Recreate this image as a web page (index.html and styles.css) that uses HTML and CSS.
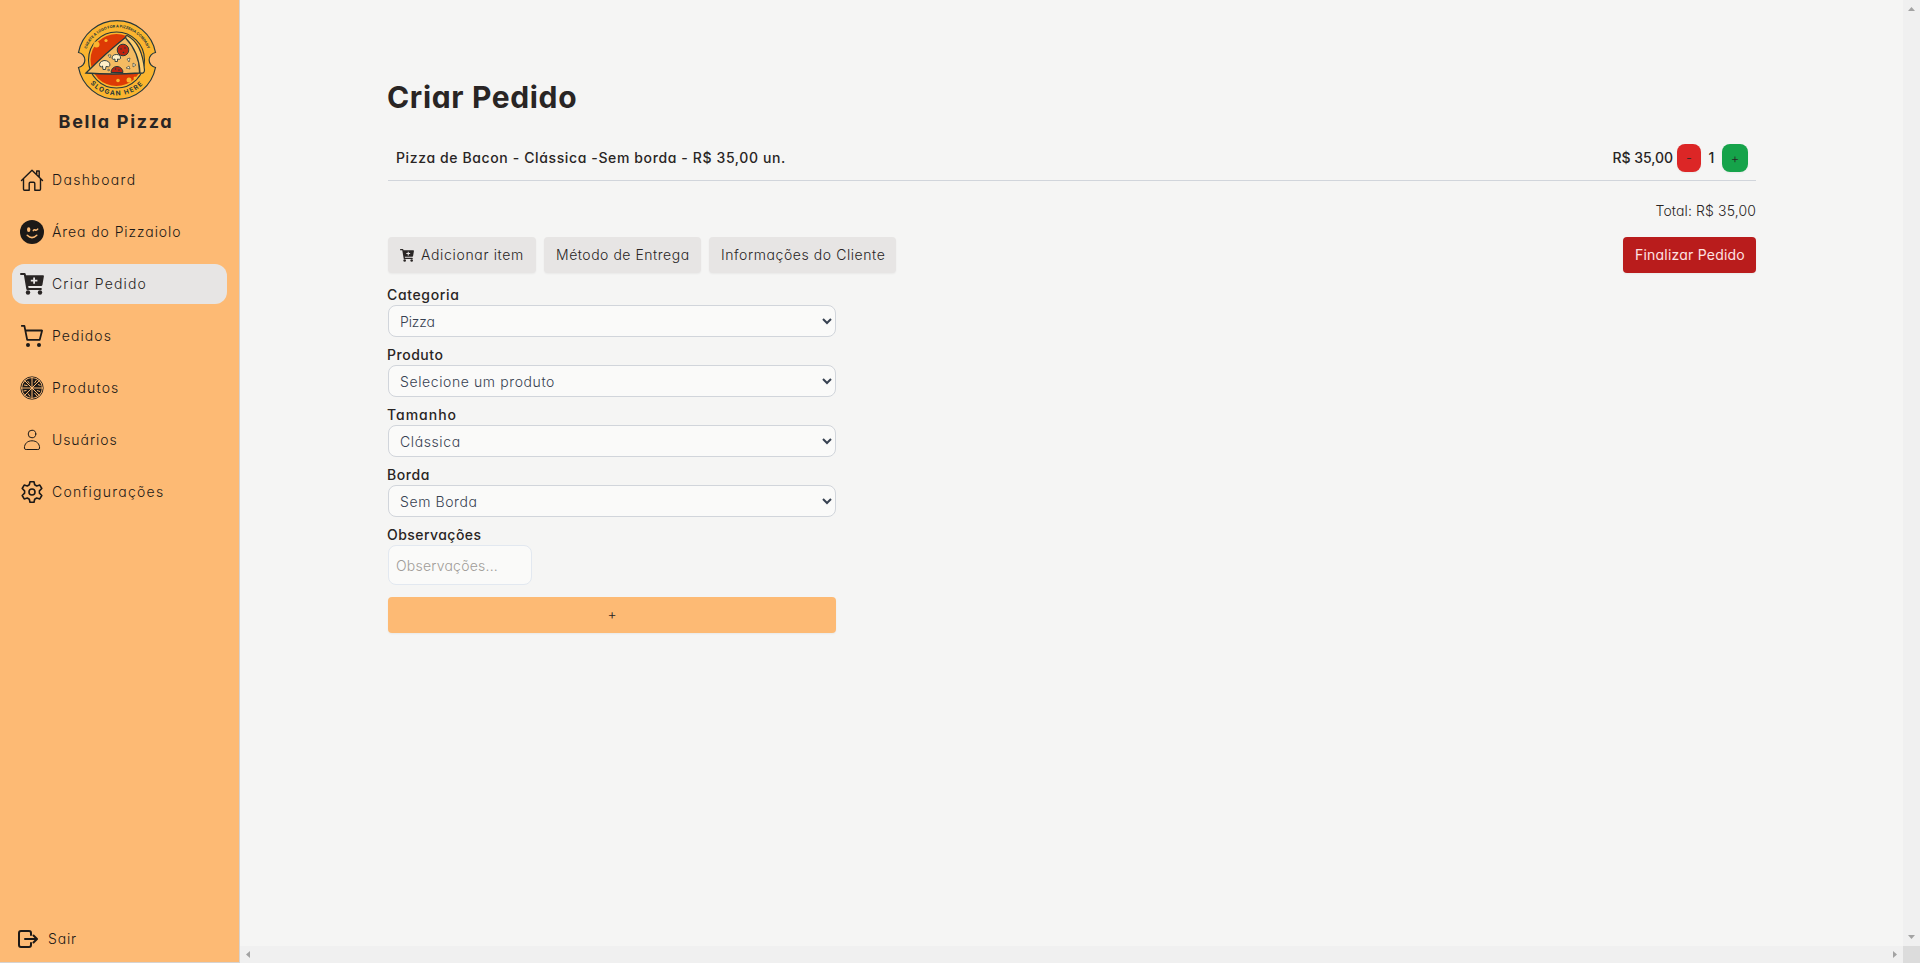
FILE: index.html
```html
<!DOCTYPE html>
<html lang="pt-BR">
<head>
<meta charset="utf-8">
<title>Bella Pizza</title>
<link rel="stylesheet" href="styles.css">
</head>
<body>
<svg width="0" height="0" class="defs">
  <symbol id="cart-plus" viewBox="0 0 24 22">
    <path fill="currentColor" fill-rule="evenodd" d="M1 0h3.6q.9 0 1.1.9L6 2.200h17q1.100 0 .9 1.100l-1.500 8.600q-.2 1.100-1.300 1.100H8.200l.4 2h12.300a1 1 0 0 1 0 2H7.300q-.9 0-1-.9L3.900 2H1a1 1 0 0 1 0-2zM13.200 4.500v2.200h-2.400v1.800h2.400v2.300h1.800v-2.300h2.400v-1.800H15V4.500z"/>
    <circle fill="currentColor" cx="8" cy="19.500" r="2.200"/><circle fill="currentColor" cx="20" cy="19.500" r="2.200"/>
  </symbol>
</svg>
<div class="app">
  <aside class="sidebar">
    <div class="brand">
      <svg class="logo" viewBox="0 0 80 80">
        <defs>
          <path id="arcTop" d="M7.500 40A32.500 32.500 0 0 1 72.500 40"/>
          <path id="arcBottom" d="M4.500 40A35.500 35.500 0 0 0 75.500 40"/>
        </defs>
        <path d="M1.500 32.500A39.200 39.200 0 0 1 78.500 32.500A7.600 7.600 0 0 0 78.500 47.500A39.200 39.200 0 0 1 1.500 47.500A7.600 7.600 0 0 0 1.500 32.500Z" fill="#fbb52f" stroke="#26383a" stroke-width="1.200"/>
        <circle cx="39.500" cy="40" r="28" fill="#fbb52f" stroke="#26383a" stroke-width="1.100"/>
        <circle cx="39.500" cy="40" r="26" fill="#dd3a05"/>
        <circle cx="19.500" cy="24.500" r="3" fill="#fbb52f"/><circle cx="29" cy="20.500" r="1.600" fill="#fbb52f"/>
        <circle cx="41" cy="60.500" r="1.800" fill="#fbb52f"/><circle cx="52" cy="60" r="2.500" fill="#fbb52f"/><circle cx="58" cy="58" r="1.500" fill="#fbb52f"/>
        <path d="M9 53Q30 32 49 17Q63 30 62.500 53Q36 55 9 53Z" fill="#f4bb62" stroke="#26383a" stroke-width="1.300"/>
        <path d="M50 15.500Q65 23 67.500 50Q67.500 54 63 53Q62 32 49 18.500Q48 15.500 50 15.500Z" fill="#ffcf70" stroke="#26383a" stroke-width="1.200"/>
        <g fill="#bd2410" stroke="#26383a"><circle cx="46" cy="30" r="5.800"/><path d="M34 52.500a6 6 0 1 1 12 0z"/></g>
        <g fill="#26383a"><circle cx="44" cy="29" r=".8"/><circle cx="48" cy="28" r=".8"/><circle cx="46.500" cy="32.500" r=".8"/><circle cx="38.500" cy="49" r=".8"/><circle cx="42" cy="50" r=".8"/></g>
        <g fill="#fff0c8" stroke="#26383a" stroke-width=".9"><path d="M23 46.500q-2-4.500 4-6 6 0 6 5-1 2-4 1l-.5 3h-2.500l-.5-3.500q-1 1.500-2.500.5z"/><path d="M35 38.500q0-4 4.500-4t4 4q-1 1.500-3 .5v2.500h-2.500V39q-2 1-3-.5z"/><path d="M31 35l3 0-1 3zM50 39l3-1-1 4zM56 43l3 2-3 2zM49 48l3-2 1 3zM31 49l2 1-2 1z" stroke-width=".6"/></g>
        <text class="logo-top"><textPath href="#arcTop" startOffset="50%">CREATE A LOGO FOR A PIZZERIA COMPANY</textPath></text>
        <text class="logo-bottom"><textPath href="#arcBottom" startOffset="50%">SLOGAN HERE</textPath></text>
      </svg>
      <div class="brand-name">Bella Pizza</div>
    </div>
    <nav class="menu">
      <a class="item"><svg viewBox="0 0 24 24" class="stroke thin"><path d="M1.500 12.500 12 2.200l10.500 10.300M3.500 10.800v10.400q0 1 1 1h4.700v-6.700q0-1.200 1.200-1.200h3.200q1.200 0 1.200 1.200v6.700h4.700q1 0 1-1V10.800M16.700 6.500V3h2.500v6"/></svg><span class="t-dash">Dashboard</span></a>
      <a class="item"><svg viewBox="0 0 24 24"><circle cx="12" cy="12" r="12" fill="currentColor"/><g class="face"><ellipse cx="8.700" cy="9.700" rx="1.700" ry="2.400"/><path d="M13.300 10.600q.8-1.200 2-.6t2.400-.9"/><path d="M7.200 15.300q4.800 4.600 9.600 0"/></g></svg><span class="t-area">Área do Pizzaiolo</span></a>
      <a class="item active"><svg viewBox="0 0 24 22" class="cart"><use href="#cart-plus"/></svg><span class="t-criar">Criar Pedido</span></a>
      <a class="item"><svg viewBox="0 0 24 24" class="stroke thick"><path d="M2 1.900h2.400l2.800 14h12.500L22.100 6.500H5.500"/><circle cx="8" cy="21" r="2" class="dot"/><circle cx="19" cy="21" r="2" class="dot"/></svg><span class="t-pedidos">Pedidos</span></a>
      <a class="item"><svg viewBox="0 0 24 24"><circle cx="12" cy="12" r="11.200" fill="none" stroke="currentColor" stroke-width=".9"/><circle cx="12" cy="12" r="9.900" fill="currentColor"/><g class="cuts"><path d="M12 1v22M1 12h22M4.300 4.300l15.400 15.400M19.700 4.300 4.300 19.700"/><path d="M7.500 5l2 2.500M14.500 7l2-3M18 8.500l2.500 1M17 14.500l3 1M14.500 17l2.500 3M8 17.500l2 3M3.500 15l3-.5M4 9l3.500.6"/></g></svg><span class="t-produtos">Produtos</span></a>
      <a class="item"><svg viewBox="0 0 24 24" class="stroke user"><circle cx="12" cy="6" r="3.800"/><path d="M5.800 21.500q-1.400 0-1.400-1.400c0-4.500 3-7.300 7.600-7.300s7.600 2.800 7.600 7.300q0 1.400-1.400 1.400z"/></svg><span class="t-usuarios">Usuários</span></a>
      <a class="item"><svg viewBox="0 0 24 24" class="stroke gear"><circle cx="12" cy="12" r="3"/><path d="M10 1.700h4l.7 3.100 2 1.200 3.100-.9 2 3.400-2.400 2.300v2.400l2.400 2.300-2 3.400-3.100-.9-2 1.200-.7 3.100h-4l-.7-3.100-2-1.200-3.100.9-2-3.400 2.400-2.300v-2.400L2.200 8.500l2-3.400 3.100.9 2-1.200z"/></svg><span class="t-config">Configurações</span></a>
    </nav>
    <a class="logout"><svg viewBox="0 0 20 18" class="stroke exit"><path d="M13 5V3q0-2-2-2H3Q1 1 1 3v12q0 2 2 2h8q2 0 2-2v-2M7 9h11.500M15.500 5.500 19 9l-3.500 3.500"/></svg><span class="t-sair">Sair</span></a>
  </aside>

  <div class="viewport">
    <main class="content">
      <h1>Criar Pedido</h1>
      <div class="order">
        <span class="t-line">Pizza de Bacon - Clássica -Sem borda - R$ 35,00 un.</span>
        <div class="qty">
          <span class="t-price">R$ 35,00</span>
          <button class="step minus">-</button>
          <span class="count">1</span>
          <button class="step plus">+</button>
        </div>
      </div>
      <div class="total"><span class="t-total">Total: R$ 35,00</span></div>
      <div class="tabs">
        <button class="tab tab-add"><svg viewBox="0 0 24 22"><use href="#cart-plus"/></svg><span class="t-add">Adicionar item</span></button>
        <button class="tab tab-delivery"><span class="t-delivery">Método de Entrega</span></button>
        <button class="tab tab-client"><span class="t-client">Informações do Cliente</span></button>
        <button class="finish"><span class="t-finish">Finalizar Pedido</span></button>
      </div>
      <form class="form">
        <div class="field"><label class="t-categoria">Categoria</label><select class="s-pizza"><option>Pizza</option></select></div>
        <div class="field"><label class="t-produto">Produto</label><select><option>Selecione um produto</option></select></div>
        <div class="field"><label class="t-tamanho">Tamanho</label><select><option>Clássica</option></select></div>
        <div class="field"><label class="t-borda">Borda</label><select><option>Sem Borda</option></select></div>
        <div class="field note"><label class="t-obs">Observações</label><input placeholder="Observações..."></div>
        <button type="button" class="add">+</button>
      </form>
    </main>
    <div class="vbar"><svg viewBox="0 0 7 4"><path d="M0 4 3.500 0 7 4z"/></svg><svg viewBox="0 0 7 4"><path d="M0 0h7L3.500 4z"/></svg></div>
    <div class="hbar"><svg viewBox="0 0 4 7"><path d="M4 0v7L0 3.500z"/></svg><svg viewBox="0 0 4 7"><path d="M0 0v7l4-3.500z"/></svg></div>
    <div class="corner"></div>
  </div>
</div>
</body>
</html>
```
FILE: styles.css
```css
* { box-sizing: border-box; }
body { margin: 0; overflow: hidden; background: #f5f5f4; color: #292524; }
body, button, select, input {
  font-family: Inter, "Open Sans", sans-serif;
  font-feature-settings: "cv11";
  font-size: 14px;
  font-weight: 300;
  line-height: 20px;
}
button { border: 0; padding: 0; color: inherit; }
span, label { white-space: nowrap; }
.defs { display: block; }
.app { display: flex; height: 963px; }

.sidebar {
  width: 240px; flex: none; display: flex; flex-direction: column;
  background: #fdba74; border-right: 1px solid #d6d3d1; border-bottom: 1px solid #d6d3d1;
  padding: 20px 12px 12px; color: #1c1917;
}
.brand { display: flex; flex-direction: column; align-items: center; height: 140px; }
.logo { width: 80px; height: 80px; margin-left: -6px; }
.logo-top, .logo-bottom { text-anchor: middle; fill: #26383a; font-weight: 700; }
.logo-top { font-size: 3.700px; }
.logo-bottom { font-size: 6.500px; letter-spacing: 1.300px; }
.brand-name { font-size: 18px; font-weight: 700; letter-spacing: 1.700px; line-height: 24px; margin: 10px 0 0 -7px; color: #292524; }
.menu { display: flex; flex-direction: column; gap: 12px; }
.item { display: flex; align-items: center; height: 40px; padding-left: 8px; gap: 8px; border-radius: 12px; width: 215px; }
.item svg { width: 24px; height: 24px; flex: none; }
.item svg.cart { height: 22px; }
.active { background: #e7e5e4; color: #292524; }
.logout { display: flex; align-items: center; gap: 10px; margin-top: auto; height: 22px; padding-left: 6px; }
.logout svg { width: 20px; height: 18px; }
.stroke { fill: none; stroke: currentColor; stroke-linejoin: round; stroke-linecap: round; }
.thin { stroke-width: 1.400; }
.user { stroke-width: 1; }
.thick { stroke-width: 1.800; stroke-linecap: square; }
.gear { stroke-width: 1.600; }
.exit { stroke-width: 2; }
.dot { fill: currentColor; stroke: none; }
.face { fill: none; stroke: #fdba74; stroke-width: 1.500; stroke-linecap: round; }
.face ellipse { fill: #fdba74; stroke: none; }
.cuts { stroke: #fdba74; stroke-width: 1; fill: none; }

.viewport { flex: 1; display: grid; grid-template: 946px 17px / 1fr 17px; }
.content { padding: 76px 147px 0 148px; min-width: 0; }
h1 { margin: 0 0 0 -1px; font-size: 30px; font-weight: 700; line-height: 43px; letter-spacing: .650px; }
.order { display: flex; justify-content: space-between; align-items: center; height: 46px; margin-top: 16px; padding: 0 8px; font-weight: 500; border-bottom: 1px solid #d1d5db; }
.qty { display: flex; align-items: center; }
.step { height: 28px; border-radius: 8px; font-size: 13px; box-shadow: 0 1px 2px rgba(0, 0, 0, .05); }
.minus { width: 24px; background: #dc2626; margin-left: 4px; }
.plus { width: 26px; background: #16a34a; }
.count { width: 21px; text-align: center; }
.total { display: flex; justify-content: flex-end; margin-top: 20px; }
.tabs { display: flex; gap: 8px; margin-top: 16px; }
.tab, .finish { height: 36px; display: flex; align-items: center; border-radius: 4px; padding-left: 12px; background: #e7e5e4; box-shadow: 0 1px 2px rgba(0, 0, 0, .05); }
.tab svg { width: 14px; height: 13px; margin-right: 7px; }
.tab-add { width: 148px; }
.tab-delivery { width: 157px; }
.tab-client { width: 187px; }
.finish { width: 133px; margin-left: auto; background: #b91c1c; color: #fee2e2; font-weight: 400; }

.form { display: flex; flex-direction: column; width: 448px; margin-top: 12px; }
.field { display: flex; flex-direction: column; height: 60px; }
label { font-weight: 500; line-height: 20px; margin-left: -1px; }
select { height: 32px; padding: 0 1px 0 7px; border: 1px solid #d1d5db; border-radius: 8px; background: #fafaf9; color: #374151; letter-spacing: .600px; }
.s-pizza { letter-spacing: -.150px; }
.note { height: 72px; }
input { width: 144px; height: 40px; padding: 0 7px; border: 1px solid #e2e8f0; border-radius: 8px; background: #fafaf9; letter-spacing: .220px; }
input::placeholder { color: #a09c98; opacity: 1; }
.add { height: 36px; padding-bottom: 2px; border-radius: 4px; background: #fdba74; box-shadow: 0 1px 2px rgba(0, 0, 0, .05); }

.vbar, .hbar { display: flex; justify-content: space-between; align-items: center; background: #f0f0f0; }
.vbar { flex-direction: column; padding: 7px 0; }
.hbar { padding: 0 6px; }
.vbar svg { width: 7px; height: 4px; fill: #a3a3a3; }
.hbar svg { width: 4px; height: 7px; fill: #a3a3a3; }
.corner { background: #dcdcdc; }

.t-dash { letter-spacing: 1.350px; }
.t-area { letter-spacing: .910px; }
.t-criar { letter-spacing: 1.140px; }
.t-pedidos { letter-spacing: 1.070px; }
.t-produtos { letter-spacing: 1.170px; }
.t-usuarios { letter-spacing: .920px; }
.t-config { letter-spacing: 1.250px; }
.t-sair { letter-spacing: .850px; }
.t-line { letter-spacing: .620px; }
.t-add { letter-spacing: .660px; }
.t-delivery { letter-spacing: .520px; }
.t-client { letter-spacing: .570px; }
.t-finish { letter-spacing: .210px; }
.t-total { letter-spacing: .120px; }
.t-price { letter-spacing: -.050px; }
.t-categoria { letter-spacing: .640px; }
.t-produto { letter-spacing: .530px; }
.t-tamanho { letter-spacing: .990px; }
.t-borda { letter-spacing: .570px; }
.t-obs { letter-spacing: .450px; }
```
